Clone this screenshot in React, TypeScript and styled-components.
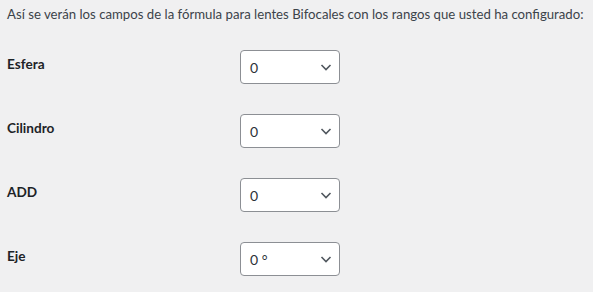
import styled, { createGlobalStyle } from "styled-components";

const GlobalStyle = createGlobalStyle`
  html, body {
    margin: 0;
    background: #f0f0f1;
  }
  body {
    font-family: Lato, "Noto Sans", sans-serif;
    color: #3c434a;
    font-size: 13px;
  }
`;

const Wrap = styled.div`
  padding: 4px 7px 0;
`;

const Intro = styled.p`
  margin: 0 0 11px;
  font-size: 13.2px;
  line-height: 20px;
  color: #3c434a;
  white-space: nowrap;
`;

const FormTable = styled.div`
  display: grid;
  grid-template-columns: 233px 100px;
`;

const Label = styled.div`
  padding: 20px 0;
  font-size: 13.6px;
  font-weight: 700;
  line-height: 18px;
  color: #1d2327;
`;

const Field = styled.div`
  padding: 15px 0;
`;

const Select = styled.div`
  box-sizing: border-box;
  display: flex;
  align-items: center;
  justify-content: space-between;
  width: 100px;
  height: 34px;
  padding: 0 5px 0 9px;
  background: #fff;
  border: 1px solid #8c8f94;
  border-radius: 4px;
  font-size: 14px;
  color: #2c3338;
`;

const Chevron = () => (
  <svg width="16" height="16" viewBox="0 0 16 16" fill="none">
    <path d="M3.5 6l4.5 4.5L12.5 6" stroke="#50575e" strokeWidth="1.6" />
  </svg>
);

const fields = [
  { label: "Esfera", value: "0" },
  { label: "Cilindro", value: "0" },
  { label: "ADD", value: "0" },
  { label: "Eje", value: "0 °" },
];

export default function App() {
  return (
    <>
      <GlobalStyle />
      <Wrap>
        <Intro>
          Así se verán los campos de la fórmula para lentes Bifocales con los rangos que usted ha configurado:
        </Intro>
        <FormTable>
          {fields.map((f) => (
            <>
              <Label key={f.label + "-l"}>{f.label}</Label>
              <Field key={f.label + "-f"}>
                <Select>
                  <span>{f.value}</span>
                  <Chevron />
                </Select>
              </Field>
            </>
          ))}
        </FormTable>
      </Wrap>
    </>
  );
}
